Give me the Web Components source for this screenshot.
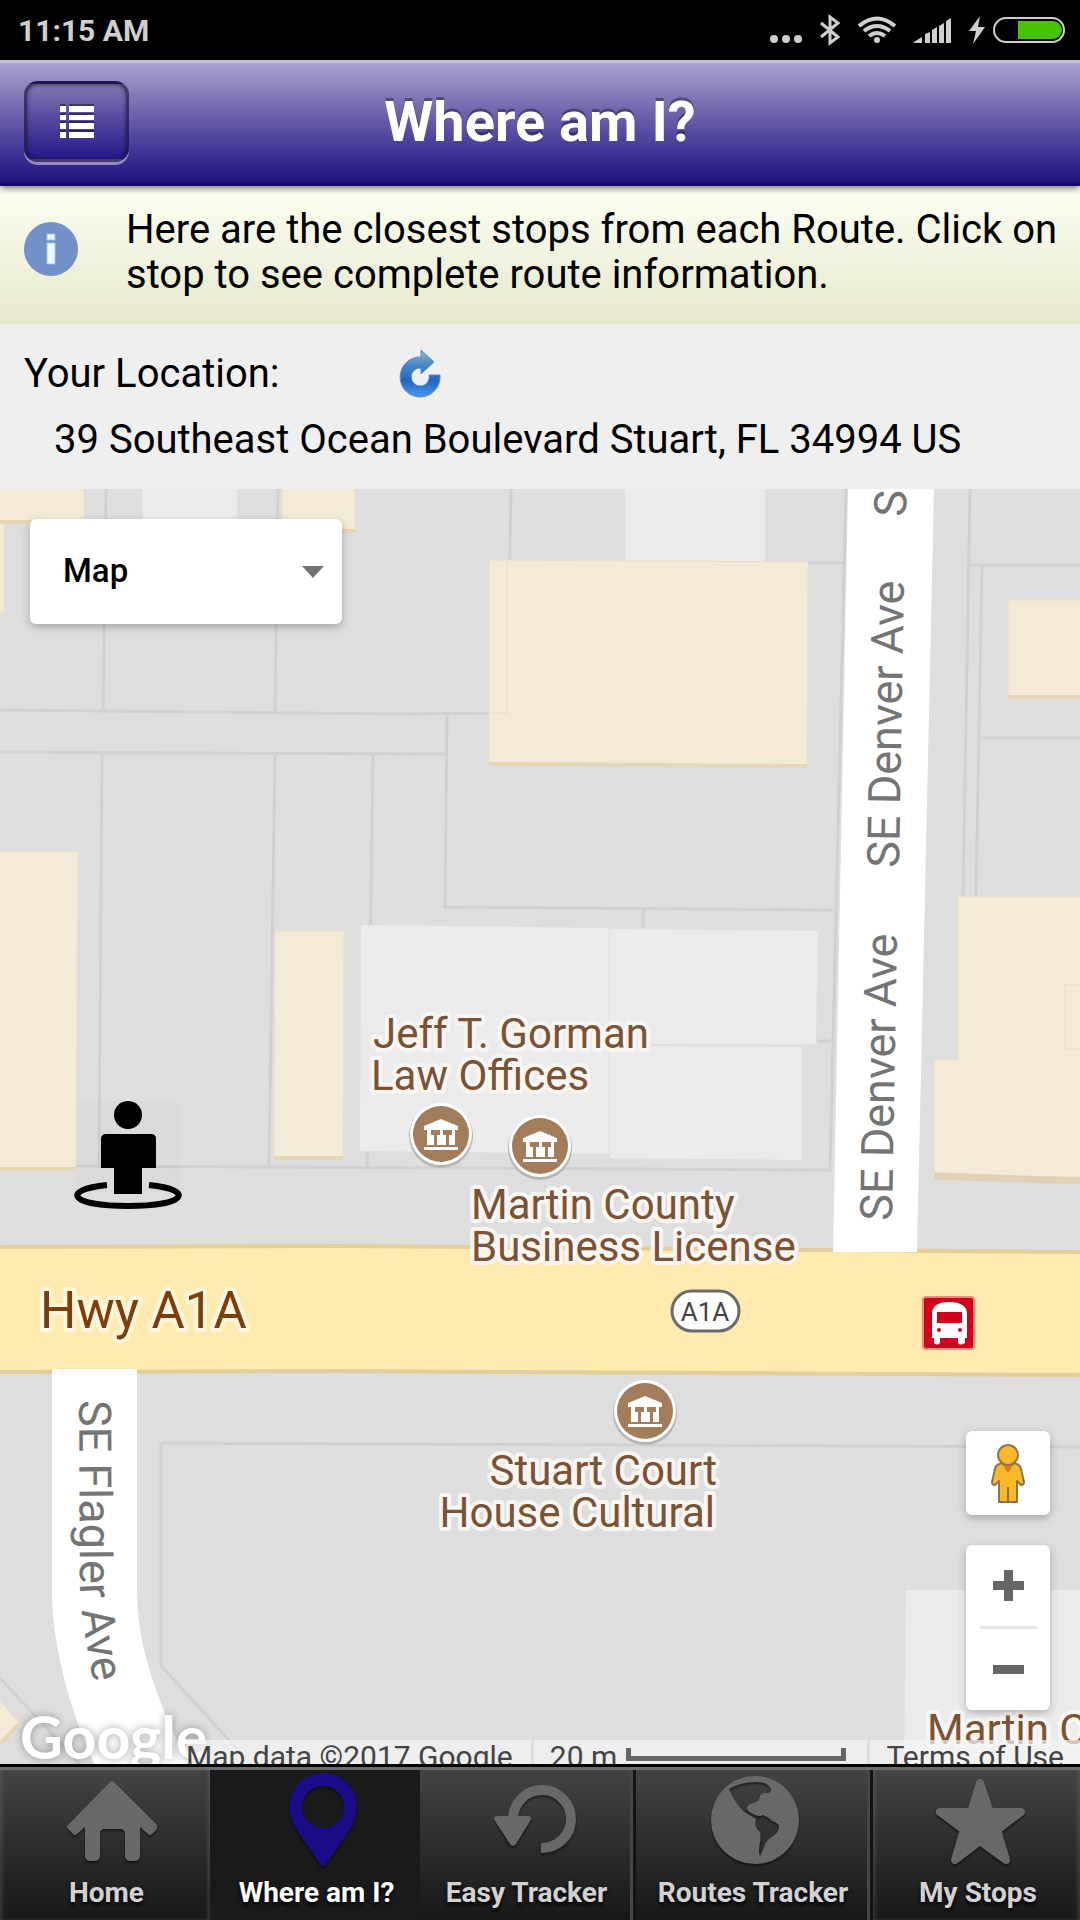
<!DOCTYPE html>
<html lang="en">
<head>
<meta charset="utf-8">
<meta name="viewport" content="width=device-width, initial-scale=1">
<title>Where am I?</title>
<style>
body
{
    margin: 0;
    min-height: 100vh;
    display: flex;
    flex-direction: column;
    font-family: Roboto, "Liberation Sans", sans-serif;
    background: #efefef;
    color: #000;
}
route-map
{
    flex: 1;
}
</style>
</head>
<body>

<status-bar>11:15 AM</status-bar>
<app-header>Where am I?</app-header>
<info-banner>Here are the closest stops from each Route. Click on stop to see complete route information.</info-banner>
<location-panel>
    <span slot="label">Your Location:</span>
    39 Southeast Ocean Boulevard Stuart, FL 34994 US
</location-panel>
<route-map></route-map>
<tab-bar>
    <tab-item href="#home">
        <svg slot="icon" viewBox="0 0 100 100" width="100" height="100" aria-hidden="true"><path d="M52 13q3-4 6 0l42 42q2 2 0 4l-5 5q-2 2-4 0l-8-7v28q0 6-6 6h-3q-6 0-6-6v-21q0-5-5-5h-15q-5 0-5 5v21q0 6-6 6h-3q-6 0-6-6v-28l-8 7q-2 2-4 0l-5-5q-2-2 0-4z"/></svg>
        Home
    </tab-item>
    <tab-item href="#where" active>
        <svg slot="icon" viewBox="0 0 100 100" width="100" height="100" aria-hidden="true"><path fill-rule="evenodd" d="M56 3a34 34 0 0 1 34 34c0 11-7 22-13 31l-18 26q-3 4-6 0L35 68c-6-9-13-20-13-31A34 34 0 0 1 56 3zm0 13a21 21 0 1 0 0 42a21 21 0 1 0 0-42z"/></svg>
        Where am I?
    </tab-item>
    <tab-item href="#easy" divided>
        <svg slot="icon" viewBox="0 0 100 100" width="100" height="100" aria-hidden="true"><path d="M64 78a29 29 0 1 0-28-30" fill="none" stroke="currentColor" stroke-width="10"/><path d="M21 46h29q6 0 3 5L39 74q-3 4-6 0L18 51q-3-5 3-5z"/></svg>
        Easy Tracker
    </tab-item>
    <tab-item href="#routes" divided>
        <svg slot="icon" viewBox="0 0 100 100" width="100" height="100" aria-hidden="true"><path fill-rule="evenodd" d="M52 6a44 44 0 1 0 0 88a44 44 0 1 0 0-88zM26 19q12-7 28-7q12 0 14 8q-1 4-4 3q-6-1-7 3q-1 6-7 7q-7 2-6 6q1 3 8 6q5 2 8 0q5 2 9 6q6 2 7 5q0 6-6 10q-7 4-9 11q-2 6-4 9q-2-4 0-14q1-7 0-10q-6-4-4-13l-12-7q-9-9-15-23z"/></svg>
        Routes Tracker
    </tab-item>
    <tab-item href="#stops">
        <svg slot="icon" viewBox="0 0 100 100" width="100" height="100" aria-hidden="true"><path stroke="currentColor" stroke-width="8" stroke-linejoin="round" d="M52 13l10 29h31L69 60l9 30-26-19-25 19 9-30L12 42h31z"/></svg>
        My Stops
    </tab-item>
</tab-bar>

<script>
// small helper: every element below is a template cloned in an open shadow root
function define(name, html, setup)
{
    const template = document.createElement("template");
    template.innerHTML = html;

    customElements.define(name, class extends HTMLElement
    {
        constructor()
        {
            super();
            this.attachShadow({ mode: "open" });
            this.shadowRoot.appendChild(template.content.cloneNode(true));
        }

        connectedCallback()
        {
            if (setup) setup(this, this.shadowRoot);
        }
    });
}

// ---------------------------------------- STATUS BAR ----------------------------------------

define("status-bar", `
<style>
:host
{
    display: flex;
    align-items: center;
    height: 60px;
    padding: 0 15px 0 18px;
    background: #000;
    color: #cfcfcf;
    font-size: 30px;
    font-weight: 700;
}
svg { margin-left: auto; }
</style>
<slot></slot>
<svg width="296" height="36" viewBox="769 12 296 36" fill="#cfcfcf" aria-hidden="true">
    <circle cx="774" cy="39" r="4"/><circle cx="786" cy="39" r="4"/><circle cx="798" cy="39" r="4"/>
    <path d="M821 23l17 14-8 6V17l8 6-17 14" fill="none" stroke="#cfcfcf" stroke-width="3"/>
    <g fill="none" stroke="#cfcfcf" stroke-width="4">
        <path d="M859 26q18-15 36 0"/><path d="M864 31q13-10 26 0"/><path d="M869 36q8-6 16 0"/>
    </g>
    <circle cx="877" cy="40" r="3"/>
    <path d="M914 43v-1l8-5v6zM925 43v-9l5-2v11zM932 43V30l5-3v16zM939 43V26l5-3v20zM946 43V21l5-3v25z"/>
    <path d="M980 16l-11 15h7l-3 13 12-17h-7z"/>
    <rect x="994" y="18" width="70" height="24" rx="12" fill="none" stroke="#cfcfcf" stroke-width="2"/>
    <path d="M1018 21h35a9 9 0 0 1 0 18h-35z" fill="#47c200"/>
</svg>
`);

// ---------------------------------------- HEADER ----------------------------------------

define("app-header", `
<style>
:host
{
    display: grid;
    grid-template-columns: 129px 1fr 129px;
    align-items: center;
    box-sizing: border-box;
    height: 126px;
    position: relative;
    z-index: 1;
    border-top: 3px solid #c4bfdd;
    border-bottom: 3px solid #160962;
    background: linear-gradient(#aba3d3, #7f75b5 30%, #5449a0 60%, #1d117f);
    box-shadow: 0 2px 7px rgba(0, 0, 0, .55);
}
h1
{
    margin: 0 0 3px;
    text-align: center;
    color: #fff;
    font-size: 56px;
    line-height: 64px;
    text-shadow: 0 -3px 0 rgba(0, 0, 0, .35);
}
button
{
    display: flex;
    align-items: center;
    justify-content: center;
    box-sizing: border-box;
    width: 105px;
    height: 81px;
    margin: 0 0 3px 24px;
    padding: 0;
    border: 3px solid rgba(30, 20, 60, .6);
    border-radius: 14px;
    background: linear-gradient(#8379b4, #574ba1 45%, #251887);
    box-shadow: 0 3px 0 #9389cb, inset 0 1px 4px rgba(0, 0, 0, .5);
}
svg { filter: drop-shadow(0 -2px 0 rgba(0, 0, 0, .4)); }
</style>
<button type="button" aria-label="Menu">
    <svg width="34" height="32" viewBox="0 0 34 32" fill="#fff">
        <path d="M0 0h6v6H0zM9 0h25v6H9zM0 9h6v5H0zM9 9h25v5H9zM0 17h6v6H0zM9 17h25v6H9zM0 26h6v6H0zM9 26h25v6H9z"/>
    </svg>
</button>
<h1><slot></slot></h1>
`);

// ---------------------------------------- INFO BANNER ----------------------------------------

define("info-banner", `
<style>
:host
{
    display: flex;
    align-items: flex-start;
    gap: 48px;
    box-sizing: border-box;
    min-height: 138px;
    padding: 21px 15px 27px 24px;
    background: linear-gradient(#fdfff2, #e7e8cd);
    font-size: 40px;
    line-height: 45px;
}
svg
{
    flex: none;
    margin-top: 15px;
}
p { margin: 0; }
</style>
<svg width="54" height="54" viewBox="0 0 54 54" aria-hidden="true">
    <circle cx="27" cy="27" r="27" fill="#7390c8"/>
    <path d="M23 12h8v6h-8zM23 21h8v21h-8z" fill="#effbff" stroke="#a9c0e2"/>
</svg>
<p><slot></slot></p>
`);

// ---------------------------------------- LOCATION ----------------------------------------

define("location-panel", `
<style>
:host
{
    display: block;
    box-sizing: border-box;
    min-height: 165px;
    padding: 20px 24px 19px;
    background: #efefef;
    font-size: 40px;
    line-height: 60px;
}
.row
{
    display: grid;
    grid-template-columns: 372px auto;
    justify-content: start;
    align-items: center;
}
.address
{
    margin: 6px 0 0 30px;
}
button
{
    display: flex;
    padding: 0;
    border: 0;
    background: none;
}
</style>
<div class="row">
    <slot name="label"></slot>
    <button type="button" aria-label="Refresh location">
        <svg width="48" height="50" viewBox="396 348 48 50">
            <defs><linearGradient id="blue" x1="0" y1="0" x2="0" y2="1">
                <stop offset="0" stop-color="#8fb4d2"/><stop offset=".35" stop-color="#4585c4"/>
                <stop offset=".65" stop-color="#2465bd"/><stop offset="1" stop-color="#489af5"/>
            </linearGradient></defs>
            <path fill="url(#blue)" stroke="#5a8dc8" d="M421 349L434 361 421 373V367A9 9 0 1 0 429 374H440A20 20 0 1 1 421 356z"/>
        </svg>
    </button>
</div>
<div class="address"><slot></slot></div>
`);

// ---------------------------------------- MAP ----------------------------------------

define("route-map", `
<style>
:host
{
    display: block;
    position: relative;
    overflow: hidden;
    min-height: 600px;
    background: #dedede;
}
.canvas
{
    position: absolute;
    inset: 0;
    width: 100%;
    height: 100%;
}
.parcel { fill: none; stroke: #d0d0d0; stroke-width: 3; }
.cream { fill: #f3ead7; stroke: #eddfc4; stroke-width: 1; }
.edge { fill: none; stroke: #e6d6b8; stroke-width: 4; }
.light { fill: #ebebeb; }
.road { fill: #fff; }
text { font-family: Roboto, "Liberation Sans", sans-serif; }
.street { font-size: 45px; fill: #747474; }
.place
{
    font-size: 42px;
    fill: #7a5236;
    stroke: #f9f6f2;
    stroke-width: 8;
    stroke-linejoin: round;
    paint-order: stroke;
}
.highway
{
    font-size: 51px;
    fill: #7a3f0c;
    stroke: #fff6dc;
    stroke-width: 8;
    stroke-linejoin: round;
    paint-order: stroke;
}
.shield { font-size: 26px; fill: #444; text-anchor: middle; }
.logo
{
    font-family: Lato, sans-serif;
    font-size: 59px;
    font-weight: 700;
    fill: #fff;
    filter: drop-shadow(0 0 4px rgba(0, 0, 0, .35));
}
map-type
{
    position: absolute;
    top: 30px;
    left: 30px;
}
map-buttons
{
    position: absolute;
    right: 30px;
    bottom: 54px;
}
map-legal
{
    position: absolute;
    left: 186px;
    right: 0;
    bottom: 0;
}
</style>
<svg class="canvas" viewBox="0 489 1080 1275" preserveAspectRatio="xMidYMid slice">
    <defs>
        <g id="poi">
            <circle r="32" cy="2" fill="#b5b5b5"/>
            <circle r="31" fill="#fff"/>
            <circle r="28" fill="#a27c5b"/>
            <path fill="#fff" fill-rule="evenodd" d="M0-15L17-8v4h-3v15h-28V-4h-3v-4zM-10-4v5h3v10h3V1h3v-5zM2-4v5h3v10h3V1h3v-5zM-17 13h34v3h-34z"/>
        </g>
        <path id="flagler" d="M79 1400L80 1590Q82 1635 104 1730"/>
    </defs>

    <path class="light" d="M142 489h95v60h-95zM625 489h140v72H625zM906 1590h174v174H904z"/>
    <path class="parcel" d="M106 489L103 710M278 489L275 711M511 489L507 713M0 710L400 714L507 713M0 752L447 754M447 714L445 907L833 910M643 910v18M102 753L99 1166M275 753L269 1166M373 755L367 1167M76 1166L831 1170M846 489L830 1170M808 563h37M817 1041h14M970 489L963 896M982 565L976 896M970 565h110M981 738h99M161 1443L1080 1447M161 1443v223l90 98M0 1678l80 86"/>
    <path class="light" d="M361 925L609 928V1154L360 1151zM610 929L818 931 816 1044 610 1044zM610 1046L802 1047 802 1160 610 1158z"/>
    <path class="cream" d="M-2 487H84V522H4V613H-2zM282 487h73v45h-73zM489 560L808 562 807 765 489 763zM1008 600h74v97h-74zM958 897h124v280H934V1060h24zM-2 852H78L76 1168H-2zM275 931h69l-1 228h-69zM-2 1698l21 25-21 22z"/>
    <path class="edge" d="M489 764L807 766M1008 697h72M282 531h73M274 1158h69M0 1169h76M19 1724L-2 1746M0 522h84"/>
    <path d="M934 1176L1080 1181" fill="none" stroke="#e0d1b6" stroke-width="7"/>
    <path d="M507 562V713H489M1080 985h-15v64h15" fill="none" stroke="#efe4cd" stroke-width="2"/>

    <path fill="#ffeaaf" stroke="#e3cd99" stroke-width="4" d="M-4 1247L340 1246 1084 1252V1375L340 1371 -4 1372z"/>
    <path class="road" d="M848 489h86l-17 763h-84z"/>
    <path class="road" d="M52 1369h85V1590C137 1640 152 1690 188 1764H94C66 1700 52 1640 52 1590z"/>

    <text class="street" transform="translate(899 868) rotate(-89)">SE Denver Ave</text>
    <text class="street" transform="translate(892 1221) rotate(-89)">SE Denver Ave</text>
    <text class="street" transform="translate(906 517) rotate(-89)">S</text>
    <text class="street"><textPath href="#flagler">SE Flagler Ave</textPath></text>

    <text class="highway" x="40" y="1328">Hwy A1A</text>
    <text class="place" x="373" y="1048">Jeff T. Gorman</text>
    <text class="place" x="371" y="1090">Law Offices</text>
    <text class="place" x="471" y="1219">Martin County</text>
    <text class="place" x="471" y="1261">Business License</text>
    <text class="place" x="717" y="1485" text-anchor="end">Stuart Court</text>
    <text class="place" x="715" y="1527" text-anchor="end">House Cultural</text>
    <text class="place" x="927" y="1744">Martin County</text>

    <use href="#poi" x="441" y="1134"/>
    <use href="#poi" x="540" y="1146"/>
    <use href="#poi" x="645" y="1411"/>

    <rect x="672" y="1291" width="67" height="40" rx="20" fill="#fff" stroke="#6b6b6b" stroke-width="3"/>
    <text class="shield" x="705" y="1321">A1A</text>

    <!-- bus stop -->
    <rect x="923" y="1297" width="51" height="52" rx="3" fill="#d2001a" stroke="#f08a80" stroke-width="2"/>
    <path fill="#fff" fill-rule="evenodd" d="M932 1338v-24q0-12 17-12q18 0 18 12v24h-2v5q-5 3-7 0v-5h-18v5q-3 3-6 0v-5zM937 1312v11h25v-11z"/>
    <circle cx="939" cy="1330" r="2" fill="#d2001a"/><circle cx="960" cy="1330" r="2" fill="#d2001a"/>

    <!-- where the user stands -->
    <rect x="76" y="1102" width="105" height="90" opacity=".01"/>
    <circle cx="128" cy="1115" r="14"/>
    <path d="M101 1168v-29q0-5 5-5h45q5 0 5 5v29h-14v26h-28v-26z"/>
    <path d="M107 1185C60 1190 70 1206 128 1206S196 1190 149 1185" fill="none" stroke="#000" stroke-width="6"/>

    <text class="logo" x="20" y="1759">Google</text>
</svg>
<map-type></map-type>
<map-buttons></map-buttons>
<map-legal></map-legal>
`);

define("map-type", `
<style>
:host
{
    display: grid;
    align-items: center;
    width: 312px;
    height: 105px;
    border-radius: 6px;
    background: #fff;
    box-shadow: 0 3px 9px rgba(0, 0, 0, .25);
}
select, svg { grid-area: 1 / 1; }
select
{
    appearance: none;
    width: 100%;
    height: 100%;
    padding: 0 60px 3px 33px;
    border: 0;
    border-radius: 6px;
    background: none;
    color: #000;
    font: 500 33px Roboto, "Liberation Sans", sans-serif;
}
svg
{
    justify-self: end;
    margin-right: 18px;
    pointer-events: none;
}
</style>
<select aria-label="Map type"><option>Map</option><option>Satellite</option></select>
<svg width="22" height="12" viewBox="0 0 22 12"><path d="M0 0h22L11 12z" fill="#737373"/></svg>
`);

define("map-buttons", `
<style>
:host
{
    display: flex;
    flex-direction: column;
    gap: 30px;
    width: 84px;
}
.card
{
    display: flex;
    flex-direction: column;
    align-items: center;
    border-radius: 6px;
    background: #fff;
    box-shadow: 0 3px 9px rgba(0, 0, 0, .25);
}
button
{
    display: flex;
    align-items: center;
    justify-content: center;
    width: 84px;
    height: 84px;
    padding: 0;
    border: 0;
    background: none;
}
.zoom button { height: 81px; }
hr
{
    width: 57px;
    height: 3px;
    margin: 0;
    border: 0;
    background: #e6e6e6;
}
</style>
<div class="card">
    <button type="button" aria-label="Street View">
        <svg width="36" height="60" viewBox="0 0 36 60" stroke="#8a7648" stroke-width="2" stroke-linejoin="round" fill="#fbb829">
            <path d="M9 21q9-3 18 0q3 1 4 5l3 13q0 3-3 3l-4-4v21H9V38l-4 4q-3 0-3-3l3-13q1-4 4-5z"/>
            <path d="M18 44v15"/>
            <path d="M12 21h12l-6 9z" fill="#e07a12" stroke="none"/>
            <circle cx="18" cy="12" r="10"/>
        </svg>
    </button>
</div>
<div class="card zoom">
    <button type="button" aria-label="Zoom in"><svg width="32" height="31" viewBox="0 0 32 31"><path d="M12 0h9v11h11v9H21v11h-9V20H1v-9h11z" fill="#666"/></svg></button>
    <hr>
    <button type="button" aria-label="Zoom out"><svg width="32" height="9" viewBox="0 0 32 9"><path d="M1 0h31v9H1z" fill="#666"/></svg></button>
</div>
`);

// attribution strip, its lower part runs under the tab bar
define("map-legal", `
<style>
:host
{
    display: flex;
    gap: 3px;
    height: 24px;
    overflow: hidden;
    color: #444;
    font-size: 30px;
    line-height: 34px;
    white-space: nowrap;
}
span, a
{
    display: flex;
    gap: 9px;
    box-sizing: border-box;
    padding: 0 16px;
    background: rgba(245, 245, 245, .7);
}
.copy { padding: 0 18px 0 0; }
.scale
{
    flex: 1;
    padding-right: 21px;
}
a
{
    color: inherit;
    text-decoration: none;
}
i
{
    flex: 1;
    height: 8px;
    margin-top: 8px;
    border: solid #666;
    border-width: 0 5px 5px;
}
</style>
<span class="copy">Map data ©2017 Google</span>
<span class="scale">20 m <i></i></span>
<a href="#terms">Terms of Use</a>
`);

// ---------------------------------------- TAB BAR ----------------------------------------

define("tab-bar", `
<style>
:host
{
    display: grid;
    grid-template-columns: 210fr 210fr 216fr 237fr 207fr;
    height: 150px;
    position: relative;
    border-top: 3px solid #6d6d6b;
    background: linear-gradient(#434343, #2d2d2d 50%, #181818);
    box-shadow: 0 -3px 0 #000;
    margin-top: 3px;
}
</style>
<slot></slot>
`);

define("tab-item", `
<style>
:host
{
    display: block;
    box-sizing: border-box;
    min-width: 0;
    box-shadow: inset 3px 0 3px rgba(120, 120, 120, .25), inset -3px 0 3px rgba(120, 120, 120, .25);
}
:host([divided])
{
    border-right: 3px solid #141414;
    box-shadow: inset -3px 0 0 #464646;
    padding-right: 3px;
}
:host([active])
{
    background: #1a1a1a;
    box-shadow: none;
}
a
{
    display: flex;
    flex-direction: column;
    align-items: center;
    height: 100%;
    padding-left: 3px;
    color: #d2d2d2;
    font-size: 28px;
    font-weight: 700;
    line-height: 32px;
    text-decoration: none;
    white-space: nowrap;
    text-shadow: 0 3px 4px #000;
}
:host([active]) a { color: #fff; }
.icon
{
    height: 107px;
    color: #686868;
}
:host([active]) .icon { color: #1b0c88; }
::slotted(svg)
{
    display: block;
    fill: currentColor;
    filter: drop-shadow(0 2px 1px rgba(0, 0, 0, .5));
}
</style>
<a><span class="icon"><slot name="icon"></slot></span><span><slot></slot></span></a>
`, (host, root) =>
{
    const link = root.querySelector("a");
    link.setAttribute("href", host.getAttribute("href"));
    if (host.hasAttribute("active")) link.setAttribute("aria-current", "page");
});
</script>
</body>
</html>
